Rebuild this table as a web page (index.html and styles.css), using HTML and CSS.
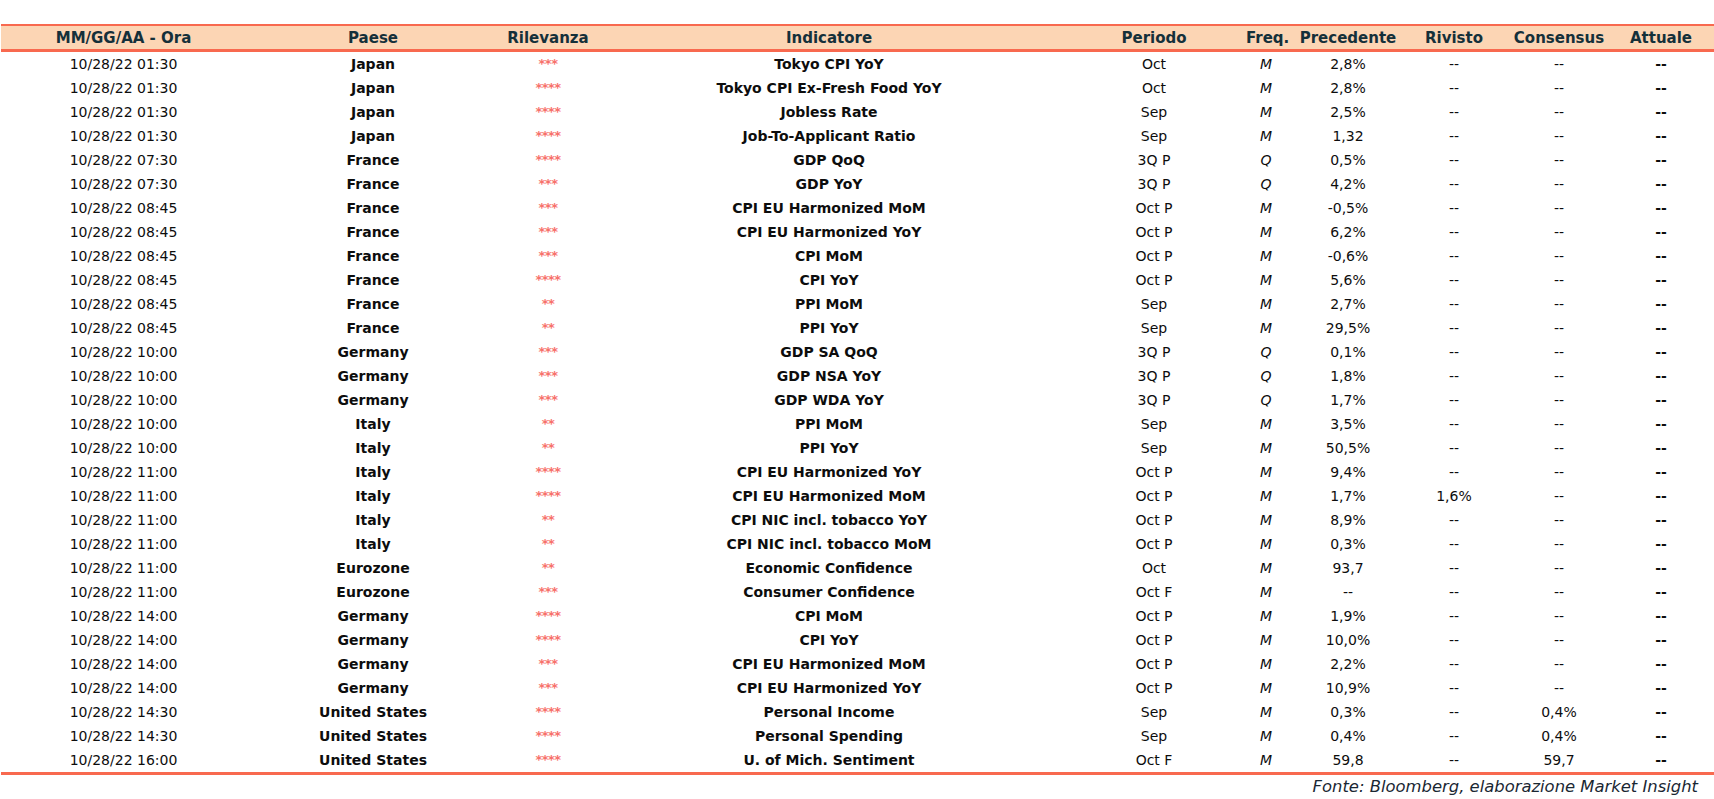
FILE: index.html
```html
<!DOCTYPE html>
<html lang="it">
<head>
<meta charset="utf-8">
<title>Calendario macro</title>
<link rel="stylesheet" href="styles.css">
</head>
<body>
<div class="page">
<table class="cal">
<colgroup>
<col class="c-date"><col class="c-country"><col class="c-rel"><col class="c-ind"><col class="c-per"><col class="c-freq"><col class="c-prev"><col class="c-rev"><col class="c-cons"><col class="c-act"><col class="c-pad">
</colgroup>
<thead>
<tr><th>MM/GG/AA - Ora</th><th>Paese</th><th>Rilevanza</th><th>Indicatore</th><th>Periodo</th><th>Freq.</th><th>Precedente</th><th>Rivisto</th><th>Consensus</th><th>Attuale</th><th></th></tr>
</thead>
<tbody>
<tr><td>10/28/22 01:30</td><td class="b">Japan</td><td class="st">***</td><td class="b">Tokyo CPI YoY</td><td>Oct</td><td class="fq">M</td><td>2,8%</td><td>--</td><td>--</td><td class="b">--</td><td></td></tr>
<tr><td>10/28/22 01:30</td><td class="b">Japan</td><td class="st">****</td><td class="b">Tokyo CPI Ex-Fresh Food YoY</td><td>Oct</td><td class="fq">M</td><td>2,8%</td><td>--</td><td>--</td><td class="b">--</td><td></td></tr>
<tr><td>10/28/22 01:30</td><td class="b">Japan</td><td class="st">****</td><td class="b">Jobless Rate</td><td>Sep</td><td class="fq">M</td><td>2,5%</td><td>--</td><td>--</td><td class="b">--</td><td></td></tr>
<tr><td>10/28/22 01:30</td><td class="b">Japan</td><td class="st">****</td><td class="b">Job-To-Applicant Ratio</td><td>Sep</td><td class="fq">M</td><td>1,32</td><td>--</td><td>--</td><td class="b">--</td><td></td></tr>
<tr><td>10/28/22 07:30</td><td class="b">France</td><td class="st">****</td><td class="b">GDP QoQ</td><td>3Q P</td><td class="fq">Q</td><td>0,5%</td><td>--</td><td>--</td><td class="b">--</td><td></td></tr>
<tr><td>10/28/22 07:30</td><td class="b">France</td><td class="st">***</td><td class="b">GDP YoY</td><td>3Q P</td><td class="fq">Q</td><td>4,2%</td><td>--</td><td>--</td><td class="b">--</td><td></td></tr>
<tr><td>10/28/22 08:45</td><td class="b">France</td><td class="st">***</td><td class="b">CPI EU Harmonized MoM</td><td>Oct P</td><td class="fq">M</td><td>-0,5%</td><td>--</td><td>--</td><td class="b">--</td><td></td></tr>
<tr><td>10/28/22 08:45</td><td class="b">France</td><td class="st">***</td><td class="b">CPI EU Harmonized YoY</td><td>Oct P</td><td class="fq">M</td><td>6,2%</td><td>--</td><td>--</td><td class="b">--</td><td></td></tr>
<tr><td>10/28/22 08:45</td><td class="b">France</td><td class="st">***</td><td class="b">CPI MoM</td><td>Oct P</td><td class="fq">M</td><td>-0,6%</td><td>--</td><td>--</td><td class="b">--</td><td></td></tr>
<tr><td>10/28/22 08:45</td><td class="b">France</td><td class="st">****</td><td class="b">CPI YoY</td><td>Oct P</td><td class="fq">M</td><td>5,6%</td><td>--</td><td>--</td><td class="b">--</td><td></td></tr>
<tr><td>10/28/22 08:45</td><td class="b">France</td><td class="st">**</td><td class="b">PPI MoM</td><td>Sep</td><td class="fq">M</td><td>2,7%</td><td>--</td><td>--</td><td class="b">--</td><td></td></tr>
<tr><td>10/28/22 08:45</td><td class="b">France</td><td class="st">**</td><td class="b">PPI YoY</td><td>Sep</td><td class="fq">M</td><td>29,5%</td><td>--</td><td>--</td><td class="b">--</td><td></td></tr>
<tr><td>10/28/22 10:00</td><td class="b">Germany</td><td class="st">***</td><td class="b">GDP SA QoQ</td><td>3Q P</td><td class="fq">Q</td><td>0,1%</td><td>--</td><td>--</td><td class="b">--</td><td></td></tr>
<tr><td>10/28/22 10:00</td><td class="b">Germany</td><td class="st">***</td><td class="b">GDP NSA YoY</td><td>3Q P</td><td class="fq">Q</td><td>1,8%</td><td>--</td><td>--</td><td class="b">--</td><td></td></tr>
<tr><td>10/28/22 10:00</td><td class="b">Germany</td><td class="st">***</td><td class="b">GDP WDA YoY</td><td>3Q P</td><td class="fq">Q</td><td>1,7%</td><td>--</td><td>--</td><td class="b">--</td><td></td></tr>
<tr><td>10/28/22 10:00</td><td class="b">Italy</td><td class="st">**</td><td class="b">PPI MoM</td><td>Sep</td><td class="fq">M</td><td>3,5%</td><td>--</td><td>--</td><td class="b">--</td><td></td></tr>
<tr><td>10/28/22 10:00</td><td class="b">Italy</td><td class="st">**</td><td class="b">PPI YoY</td><td>Sep</td><td class="fq">M</td><td>50,5%</td><td>--</td><td>--</td><td class="b">--</td><td></td></tr>
<tr><td>10/28/22 11:00</td><td class="b">Italy</td><td class="st">****</td><td class="b">CPI EU Harmonized YoY</td><td>Oct P</td><td class="fq">M</td><td>9,4%</td><td>--</td><td>--</td><td class="b">--</td><td></td></tr>
<tr><td>10/28/22 11:00</td><td class="b">Italy</td><td class="st">****</td><td class="b">CPI EU Harmonized MoM</td><td>Oct P</td><td class="fq">M</td><td>1,7%</td><td>1,6%</td><td>--</td><td class="b">--</td><td></td></tr>
<tr><td>10/28/22 11:00</td><td class="b">Italy</td><td class="st">**</td><td class="b">CPI NIC incl. tobacco YoY</td><td>Oct P</td><td class="fq">M</td><td>8,9%</td><td>--</td><td>--</td><td class="b">--</td><td></td></tr>
<tr><td>10/28/22 11:00</td><td class="b">Italy</td><td class="st">**</td><td class="b">CPI NIC incl. tobacco MoM</td><td>Oct P</td><td class="fq">M</td><td>0,3%</td><td>--</td><td>--</td><td class="b">--</td><td></td></tr>
<tr><td>10/28/22 11:00</td><td class="b">Eurozone</td><td class="st">**</td><td class="b">Economic Confidence</td><td>Oct</td><td class="fq">M</td><td>93,7</td><td>--</td><td>--</td><td class="b">--</td><td></td></tr>
<tr><td>10/28/22 11:00</td><td class="b">Eurozone</td><td class="st">***</td><td class="b">Consumer Confidence</td><td>Oct F</td><td class="fq">M</td><td>--</td><td>--</td><td>--</td><td class="b">--</td><td></td></tr>
<tr><td>10/28/22 14:00</td><td class="b">Germany</td><td class="st">****</td><td class="b">CPI MoM</td><td>Oct P</td><td class="fq">M</td><td>1,9%</td><td>--</td><td>--</td><td class="b">--</td><td></td></tr>
<tr><td>10/28/22 14:00</td><td class="b">Germany</td><td class="st">****</td><td class="b">CPI YoY</td><td>Oct P</td><td class="fq">M</td><td>10,0%</td><td>--</td><td>--</td><td class="b">--</td><td></td></tr>
<tr><td>10/28/22 14:00</td><td class="b">Germany</td><td class="st">***</td><td class="b">CPI EU Harmonized MoM</td><td>Oct P</td><td class="fq">M</td><td>2,2%</td><td>--</td><td>--</td><td class="b">--</td><td></td></tr>
<tr><td>10/28/22 14:00</td><td class="b">Germany</td><td class="st">***</td><td class="b">CPI EU Harmonized YoY</td><td>Oct P</td><td class="fq">M</td><td>10,9%</td><td>--</td><td>--</td><td class="b">--</td><td></td></tr>
<tr><td>10/28/22 14:30</td><td class="b">United States</td><td class="st">****</td><td class="b">Personal Income</td><td>Sep</td><td class="fq">M</td><td>0,3%</td><td>--</td><td>0,4%</td><td class="b">--</td><td></td></tr>
<tr><td>10/28/22 14:30</td><td class="b">United States</td><td class="st">****</td><td class="b">Personal Spending</td><td>Sep</td><td class="fq">M</td><td>0,4%</td><td>--</td><td>0,4%</td><td class="b">--</td><td></td></tr>
<tr><td>10/28/22 16:00</td><td class="b">United States</td><td class="st">****</td><td class="b">U. of Mich. Sentiment</td><td>Oct F</td><td class="fq">M</td><td>59,8</td><td>--</td><td>59,7</td><td class="b">--</td><td></td></tr>
</tbody>
</table>
<p class="source">Fonte: Bloomberg, elaborazione Market Insight</p>
</div>
</body>
</html>
```
FILE: styles.css
```css
html, body {
  margin: 0;
  padding: 0;
  background: #ffffff;
}

body {
  font-family: "DejaVu Sans", "Liberation Sans", sans-serif;
  color: #0d0d0d;
}

.page {
  padding: 24px 0 0 1px;
  width: 1713px;
}

.cal {
  width: 1713px;
  border-collapse: collapse;
  table-layout: fixed;
  font-size: 14px;
}

.c-date { width: 245px; }
.c-country { width: 254px; }
.c-rel { width: 96px; }
.c-ind { width: 466px; }
.c-per { width: 184px; }
.c-freq { width: 40px; }
.c-prev { width: 124px; }
.c-rev { width: 88px; }
.c-cons { width: 122px; }
.c-act { width: 82px; }
.c-pad { width: 12px; }

.cal thead tr {
  background: #fcd5b4;
  border-top: 2px solid #f8694f;
  border-bottom: 3px solid #f8694f;
}

.cal th {
  height: 22px;
  padding: 1px 0 0;
  font-weight: bold;
  font-size: 15px;
  color: #15303a;
  text-align: center;
  white-space: nowrap;
  line-height: 22px;
}

.cal td {
  height: 24px;
  padding: 0;
  text-align: center;
  white-space: nowrap;
  line-height: 24px;
}

.cal tbody tr:last-child {
  border-bottom: 3px solid #f8694f;
}

.b { font-weight: bold; }

.fq { font-style: italic; }

.st {
  color: #f7716b;
  font-size: 13px;
  font-weight: bold;
  letter-spacing: -0.5px;
}

.source {
  margin: 0;
  width: 1697px;
  text-align: right;
  font-style: italic;
  font-size: 16.4px;
  line-height: 24px;
  color: #1a2733;
}
```
